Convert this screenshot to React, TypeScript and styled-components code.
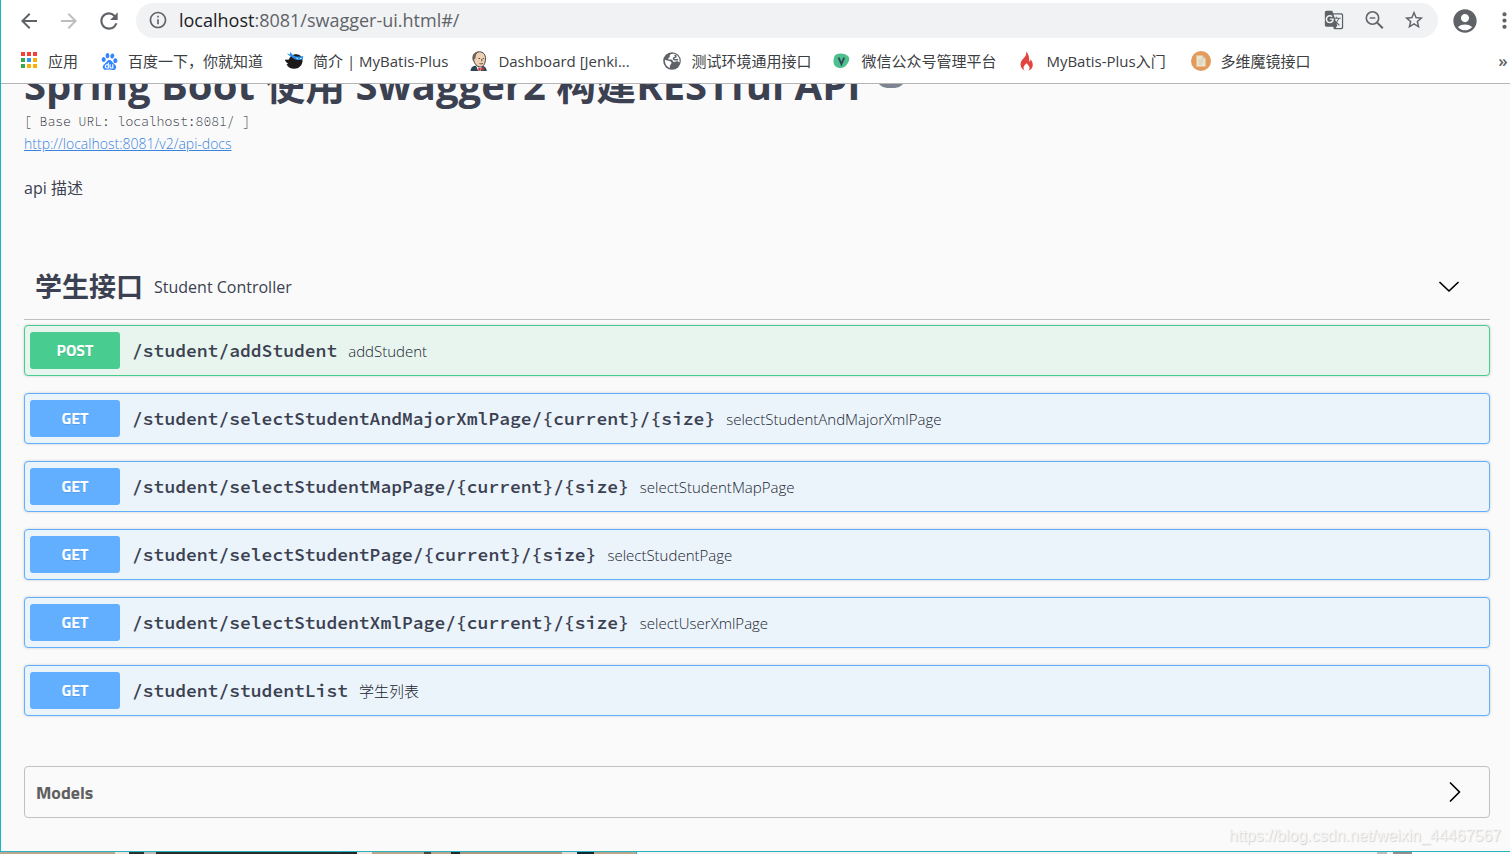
import React from "react";
import styled, { createGlobalStyle } from "styled-components";
import {
  MdAccountCircle,
  MdArrowBack,
  MdArrowForward,
  MdGTranslate,
  MdInfoOutline,
  MdMoreVert,
  MdRefresh,
  MdStarBorder,
} from "react-icons/md";
import { SiBaidu } from "react-icons/si";

const sans = `"Open Sans", "Noto Sans CJK SC", sans-serif`;
const mono = `"Source Code Pro", "Liberation Mono", monospace`;
const display = `"Titillium Web", "Open Sans", "Noto Sans CJK SC", sans-serif`;

const GlobalStyle = createGlobalStyle`
  * { box-sizing: border-box; }
  body { margin: 0; background: #fafafa; font-family: ${sans}; color: #3b4151; }
  button { border: 0; padding: 0; background: none; color: inherit; font: inherit; cursor: pointer; }
  svg { display: block; flex: none; }
`;

/* ---------- browser window ---------- */

const Desktop = styled.div`
  display: flex;
  flex-direction: column;
  height: 100vh;
`;

const Window = styled.div`
  position: relative;
  flex: 1;
  min-height: 0;
  display: flex;
  flex-direction: column;
  border-left: 1px solid #17b6c4;
  border-bottom: 1px solid #29b3bf;
  background: #fafafa;
`;

const Chrome = styled.header`
  flex: none;
  background: #fff;
  border-bottom: 1px solid #b5b4b6;
`;

const Toolbar = styled.div`
  display: flex;
  align-items: center;
  padding: 3px 0 0 16px;
`;

const NavGroup = styled.nav`
  display: flex;
  gap: 16px;
`;

const IconButton = styled.button<{ $faded?: boolean; $narrow?: boolean }>`
  display: flex;
  align-items: center;
  justify-content: center;
  width: ${(p) => (p.$narrow ? 12 : 24)}px;
  height: 24px;
  color: ${(p) => (p.$faded ? "#bdbec0" : "#5f6368")};
`;

const AddressBar = styled.div`
  flex: 1;
  display: flex;
  align-items: center;
  height: 35px;
  margin: 0 15px;
  padding: 0 12px 1px;
  border-radius: 18px;
  background: #f1f2f4;
  color: #5f6368;
`;

const Url = styled.div`
  flex: 1;
  margin-left: 11px;
  font-size: 18px;
  line-height: 24px;
  white-space: nowrap;
  outline: none;
`;

const Host = styled.span`
  color: #202124;
`;

const MenuSlot = styled.div`
  margin-left: 21px;
`;

const BookmarkBar = styled.nav`
  display: flex;
  align-items: center;
  gap: 21px;
  height: 45px;
  padding: 1px 0 0 18px;
`;

const Bookmark = styled.a`
  display: flex;
  align-items: center;
  gap: 9px;
  color: #3c4043;
  font-size: 15px;
  line-height: 24px;
  white-space: nowrap;
  text-decoration: none;
`;

const Favicon = styled.span`
  display: flex;
  align-items: center;
  justify-content: center;
  width: 20px;
  height: 20px;
  color: #5f6368;
`;

const BookmarkLabel = styled.span<{ $width?: number }>`
  min-width: ${(p) => p.$width ?? 0}px;
`;

const Overflow = styled.button`
  margin-left: auto;
  width: 14px;
  color: #5f6368;
  font-size: 17px;
  font-weight: 600;
  line-height: 20px;
`;

const Backdrop = styled.div`
  flex: none;
  height: 2px;
  background: linear-gradient(
      90deg,
      #b9a68c 0 115px,
      #efe3df 115px 129px,
      #2b312e 129px 144px,
      #bdb9b2 144px 156px,
      #262d2b 156px 342px,
      #20282a 342px 357px,
      #efe6df 357px 372px,
      #b8a68c 372px 424px,
      #4a463d 424px 431px,
      #b8a68c 431px 451px,
      #1f2a2c 451px 460px,
      #ab9a80 460px 562px,
      #e3d9d6 562px 577px,
      #10282f 577px 594px,
      #b9a68c 594px 636px,
      #17b6c4 636px 637px,
      transparent 637px
    ),
    linear-gradient(
      270deg,
      #fbfbfb 0 98px,
      #8f8f8f 98px 117px,
      #f4f4f4 117px 123px,
      #bdbdbd 123px 133px,
      #f4f4f4 133px
    );
`;

/* ---------- API page ---------- */

const Page = styled.main`
  flex: 1;
  min-height: 0;
  overflow: hidden;
  padding: 0 20px 0 23px;
`;

const Info = styled.section`
  display: flex;
  flex-direction: column;
  align-items: flex-start;
  margin-top: -23px;
`;

const TitleRow = styled.div`
  display: flex;
  align-items: flex-start;
  gap: 16px;
`;

const Title = styled.h1`
  margin: 0;
  font-size: 40px;
  font-weight: 700;
  line-height: 48px;
  white-space: nowrap;
`;

const VersionBadge = styled.span`
  width: 28px;
  height: 20px;
  margin-top: 7px;
  border-radius: 10px;
  background: #7d8492;
`;

const BaseUrl = styled.pre`
  margin: 4px 0 0;
  font-family: ${mono};
  font-size: 13px;
  font-weight: 300;
  line-height: 18px;
  color: #20242e;
`;

const DocsLink = styled.a`
  margin-top: 3px;
  color: #3a84de;
  font-size: 14px;
  font-weight: 300;
  line-height: 20px;
`;

const Description = styled.p`
  margin: 22px 0 0;
  font-size: 16px;
  line-height: 24px;
`;

const TagHeader = styled.button`
  display: flex;
  align-items: center;
  width: 100%;
  height: 65px;
  margin: 55px 0 5px;
  padding: 0 31px 0 11px;
  border-bottom: 1px solid #bdbfc3;
  text-align: left;
`;

const TagName = styled.h2`
  margin: 0;
  font-size: 27px;
  font-weight: 700;
  line-height: 32px;
`;

const TagNote = styled.span`
  flex: 1;
  margin-left: 11px;
  font-size: 16px;
  line-height: 24px;
`;

const Operations = styled.div`
  display: flex;
  flex-direction: column;
  gap: 17px;
`;

type Verb = "POST" | "GET";

const verbColors: Record<Verb, { main: string; tint: string }> = {
  POST: { main: "#49cc90", tint: "#e7f5ee" },
  GET: { main: "#61affe", tint: "#ebf3fb" },
};

const OperationRow = styled.button<{ $verb: Verb }>`
  display: flex;
  align-items: center;
  width: 100%;
  height: 51px;
  padding: 0 5px;
  border: 1px solid ${(p) => verbColors[p.$verb].main};
  border-radius: 4px;
  background: ${(p) => verbColors[p.$verb].tint};
  box-shadow: 0 0 3px rgba(0, 0, 0, 0.19);
  text-align: left;
  white-space: nowrap;
`;

const Method = styled.span<{ $verb: Verb }>`
  width: 90px;
  border-radius: 3px;
  background: ${(p) => verbColors[p.$verb].main};
  color: #fff;
  font-family: ${display};
  font-size: 16px;
  font-weight: 700;
  line-height: 37px;
  text-align: center;
  text-shadow: 0 1px 0 rgba(0, 0, 0, 0.1);
`;

const Path = styled.span`
  margin: 0 11px 0 12px;
  font-family: ${mono};
  font-size: 18px;
  font-weight: 600;
  line-height: 24px;
`;

const Summary = styled.span`
  color: #20242e;
  font-size: 15px;
  font-weight: 300;
  line-height: 24px;
`;

const ModelsBox = styled.section`
  margin-top: 50px;
  border: 1px solid #bfc1c5;
  border-radius: 4px;
`;

const ModelsHeader = styled.button`
  display: flex;
  align-items: center;
  justify-content: space-between;
  width: 100%;
  height: 50px;
  padding: 0 24px 0 11px;
  color: #606060;
  font-family: ${display};
  font-size: 18px;
  font-weight: 700;
`;

const Watermark = styled.div`
  position: absolute;
  right: 9px;
  bottom: 5px;
  color: #f6f6f6;
  font-family: "Liberation Sans", sans-serif;
  font-size: 16px;
  line-height: 20px;
  text-shadow: 1px 1px 1px #d0d0d0;
  pointer-events: none;
`;

/* ---------- drawings ---------- */

const Chevron = ({ d }: { d: string }) => (
  <svg width="20" height="20" viewBox="0 0 20 20" fill="none" stroke="#000" strokeWidth="1.7">
    <path d={d} strokeLinecap="round" strokeLinejoin="round" />
  </svg>
);

const ZoomOutIcon = () => (
  <svg width="24" height="24" viewBox="0 0 24 24" fill="none" stroke="#5f6368">
    <circle cx="10.500" cy="10" r="6.200" strokeWidth="1.600" />
    <path d="M7.700 10h5.600" strokeWidth="1.400" />
    <path d="m15.100 14.600 5.700 5.700" strokeWidth="2" />
  </svg>
);

const GlobeIcon = () => (
  <svg width="20" height="20" viewBox="0 0 20 20">
    <circle cx="10" cy="10" r="8.800" fill="#5f6368" />
    <path
      d="M12.500 3c-3.500-.6-5 .8-4.700 2.300.3 1.300-1.300 1.200-1.600 2.300-.2 1.200 1.600.9 2.900 1 1.700.1 1.300 2 2.600 2.300 1.500.3 2.300-.9 3.700-.6 1 .2 1.500.8 2 1.300.9-4-1-7.200-4.900-8.600Z"
      fill="#fff"
    />
    <path
      d="M2.900 8.800c1.500.9 3.500.7 5.300 1.500 1.700.8 1.600 2.200.5 3.200-1 .9-1 2-.7 3.500C4.800 16 2.600 12.700 2.900 8.800Z"
      fill="#fff"
    />
    <path d="M12.500 4.500c1.800-.2 2 1.500.6 1.900-1.100.3-1.900.7-1.500 1.700.5 1.200 2.600.6 4.500.5" stroke="#5f6368" strokeWidth="1.500" fill="none" />
  </svg>
);

const appColors = [
  "#f44336", "#f44336", "#f44336",
  "#34a853", "#2d9bf5", "#fbae08",
  "#34a853", "#fbae08", "#fbae08",
];

const AppsIcon = () => (
  <svg width="18" height="18" viewBox="0 0 18 18">
    {appColors.map((c, i) => (
      <rect key={i} x={1 + (i % 3) * 6} y={Math.floor(i / 3) * 6} width="4" height="4" fill={c} />
    ))}
  </svg>
);

const NinjaBirdIcon = () => (
  <svg width="20" height="20" viewBox="0 0 20 20">
    <path
      d="M.8 8.800 5 8.600C5.700 5.500 8.500 3.200 12.300 3.300c4 .2 6.500 3 6.200 7-.4 4.200-3.600 7.500-8.200 7.500-3.500 0-6.500-1.600-7.800-4.600l1.800-.2C2.700 12 1.400 10.500.8 8.800Z"
      fill="#1d191b"
    />
    <path d="M3 2.200 6 3.500 6.200.8 8.800 4c1.500.9 2.600 1.500 4 1.600 2 .2 4.500-.6 6.500-.3l-.5 3.300c-1.900.6-4.200.7-6.300.1C9.500 7.800 7.800 6 6.800 5.200 5.400 4.900 4 3.700 3 2.200Z" fill="#2791ee" />
    <path d="m12.500 7 1.600.5M16 7.600l1.500-.2" stroke="#dff0ff" strokeWidth="1" />
  </svg>
);

const ButlerIcon = () => (
  <svg width="20" height="20" viewBox="0 0 20 20">
    <path d="M1.500 20c.2-3 1.500-4.700 4.500-5.200h7c3 .5 4.500 2.200 4.800 5.200Z" fill="#2d4657" />
    <path d="M7 14.500h6l-1 5H9Z" fill="#fff" />
    <path d="M4.500 8C4 3.500 6.500.8 10.300.8c4.200 0 6.400 3 6.200 7.200-.2 4.500-2 8-5.200 8C8 16 5 12.500 4.500 8Z" fill="#efcfb2" stroke="#3a3434" strokeWidth=".9" />
    <path d="M4.600 10.500C2.800 9 3 3.500 5.500 2.300 7 1.300 8.600.8 10 .8 7.500 2.300 6.300 4.500 6.500 7.500L5.300 8Z" fill="#6c625c" />
    <path d="M9.500 7.500h1.600M13.700 7.500h1.200M12.800 8v2.200M10.500 12.400c1 .7 2.500.6 3.500-.2" stroke="#4a3a36" strokeWidth=".9" fill="none" />
    <path d="m9.300 16.200 2.700 1.200 2.700-1.200v3.500L12 18.500l-2.700 1.200Z" fill="#d33833" />
  </svg>
);

const VIcon = () => (
  <svg width="20" height="20" viewBox="0 0 20 20">
    <path d="M4.500 3.200C8 1.800 14.500 2.600 16.800 6c1.200 2 .1 5-2.300 8-1.800 2.300-4.400 3.500-7.500 2.900C3 16.300 1.300 13.500 1.500 9.800 1.600 6.500 2.300 4.100 4.500 3.200Z" fill="#4dc08d" />
    <path d="m6.600 6.700 2.800 6.500 2.800-6.500" fill="none" stroke="#2f4858" strokeWidth="1.900" />
  </svg>
);

const FlameIcon = () => (
  <svg width="20" height="20" viewBox="0 0 20 20">
    <path
      d="M9 .5c.7 2.500-.2 4.300-1.700 6C5.500 8.600 3.300 10.500 3.600 14c.2 2.500 1.700 4.400 4 5.500-1.300-1.700-1.400-3.300-.4-4.800.8-1.100 2-1.600 2.800-2.700.3 1.500 1.300 2.200 2 3.300 1 1.600.7 3-.5 4.200 2.700-.9 4.300-2.900 4.300-5.500 0-2.300-1-4-2.200-5.700-.1 1.200-.5 2-1.400 2.500C12.400 6.500 11.700 2.800 9 .5Z"
      fill="#e2453f"
    />
  </svg>
);

const PaperIcon = () => (
  <svg width="20" height="20" viewBox="0 0 20 20">
    <circle cx="10" cy="10" r="10" fill="#e39a5d" />
    <path d="M5.500 4.500h6l3 3v8h-9Z" fill="#ece6cf" />
    <path d="M11.500 4.500v3h3Z" fill="#c3bfa8" />
    <path d="M7.500 9h5M7.500 11h5M7.500 13h3.500" stroke="#cdc8b0" strokeWidth=".9" />
  </svg>
);

/* ---------- data ---------- */

const bookmarks: { label: string; icon: React.ReactNode; width?: number }[] = [
  { label: "应用", icon: <AppsIcon /> },
  { label: "百度一下，你就知道", icon: <SiBaidu size={17} color="#3385ff" /> },
  { label: "简介 | MyBatis-Plus", icon: <NinjaBirdIcon /> },
  { label: "Dashboard [Jenki...", icon: <ButlerIcon />, width: 143 },
  { label: "测试环境通用接口", icon: <GlobeIcon /> },
  { label: "微信公众号管理平台", icon: <VIcon /> },
  { label: "MyBatis-Plus入门", icon: <FlameIcon />, width: 124 },
  { label: "多维魔镜接口", icon: <PaperIcon /> },
];

const operations: { verb: Verb; path: string; summary: string }[] = [
  { verb: "POST", path: "/student/addStudent", summary: "addStudent" },
  {
    verb: "GET",
    path: "/student/selectStudentAndMajorXmlPage/{current}/{size}",
    summary: "selectStudentAndMajorXmlPage",
  },
  { verb: "GET", path: "/student/selectStudentMapPage/{current}/{size}", summary: "selectStudentMapPage" },
  { verb: "GET", path: "/student/selectStudentPage/{current}/{size}", summary: "selectStudentPage" },
  { verb: "GET", path: "/student/selectStudentXmlPage/{current}/{size}", summary: "selectUserXmlPage" },
  { verb: "GET", path: "/student/studentList", summary: "学生列表" },
];

export default function App() {
  return (
    <Desktop>
      <GlobalStyle />
      <Window>
        <Chrome>
          <Toolbar>
            <NavGroup>
              <IconButton aria-label="Back"><MdArrowBack size={24} /></IconButton>
              <IconButton aria-label="Forward" $faded><MdArrowForward size={24} /></IconButton>
              <IconButton aria-label="Reload"><MdRefresh size={26} /></IconButton>
            </NavGroup>
            <AddressBar>
              <MdInfoOutline size={20} />
              <Url role="textbox" aria-label="Address" contentEditable suppressContentEditableWarning>
                <Host>localhost</Host>:8081/swagger-ui.html#/
              </Url>
              <NavGroup>
                <IconButton aria-label="Translate"><MdGTranslate size={20} /></IconButton>
                <IconButton aria-label="Zoom"><ZoomOutIcon /></IconButton>
                <IconButton aria-label="Bookmark"><MdStarBorder size={22} /></IconButton>
              </NavGroup>
            </AddressBar>
            <IconButton aria-label="Profile"><MdAccountCircle size={28} /></IconButton>
            <MenuSlot>
              <IconButton aria-label="Menu" $narrow><MdMoreVert size={25} /></IconButton>
            </MenuSlot>
          </Toolbar>
          <BookmarkBar>
            {bookmarks.map((b) => (
              <Bookmark key={b.label} href="#">
                <Favicon>{b.icon}</Favicon>
                <BookmarkLabel $width={b.width}>{b.label}</BookmarkLabel>
              </Bookmark>
            ))}
            <Overflow aria-label="More bookmarks">»</Overflow>
          </BookmarkBar>
        </Chrome>
        <Page>
          <Info>
            <TitleRow>
              <Title>Spring Boot 使用 Swagger2 构建RESTful API</Title>
              <VersionBadge />
            </TitleRow>
            <BaseUrl>[ Base URL: localhost:8081/ ]</BaseUrl>
            <DocsLink href="#">http://localhost:8081/v2/api-docs</DocsLink>
            <Description>api 描述</Description>
          </Info>
          <TagHeader>
            <TagName>学生接口</TagName>
            <TagNote>Student Controller</TagNote>
            <Chevron d="M1 5.500 10 14l9-8.500" />
          </TagHeader>
          <Operations>
            {operations.map((o) => (
              <OperationRow key={o.path} $verb={o.verb}>
                <Method $verb={o.verb}>{o.verb}</Method>
                <Path>{o.path}</Path>
                <Summary>{o.summary}</Summary>
              </OperationRow>
            ))}
          </Operations>
          <ModelsBox>
            <ModelsHeader>
              Models
              <Chevron d="m5.500 1 9 9-9 9" />
            </ModelsHeader>
          </ModelsBox>
        </Page>
        <Watermark>https://blog.csdn.net/weixin_44467567</Watermark>
      </Window>
      <Backdrop />
    </Desktop>
  );
}
